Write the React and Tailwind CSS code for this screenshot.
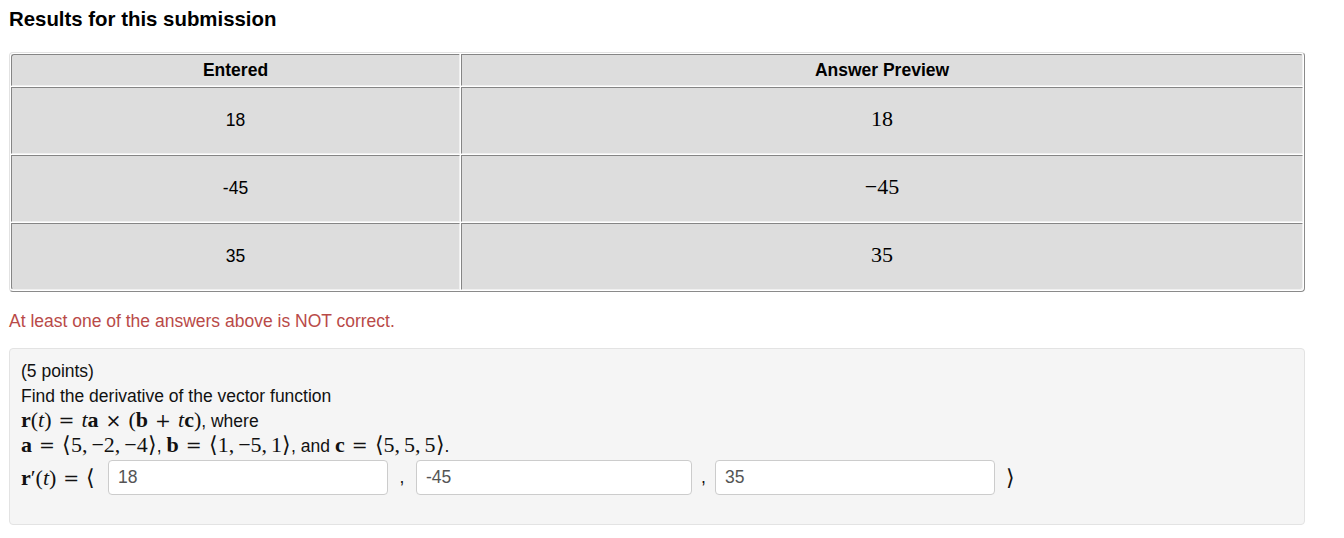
import React from 'react';

const rows = [
  { entered: '18', preview: '18' },
  { entered: '-45', preview: '\u221245' },
  { entered: '35', preview: '35' },
];

const cellBorder =
  'border border-t-[#858585] border-l-[#858585] border-b-[#f0f0f0] border-r-[#f0f0f0] bg-[#dddddd]';

const M = ({ children, className = '' }) => (
  <span className={`font-['Liberation_Serif',serif] text-[22px] leading-[20px] ${className}`}>{children}</span>
);
const B = ({ children }) => <span className="font-bold">{children}</span>;
const I = ({ children }) => <span className="italic">{children}</span>;
// relation (=) and binary (×, +) operators: wider glyphs + TeX-like spacing
const Rel = ({ children }) => (
  <span className="mx-[7px] font-['DejaVu_Serif',serif] text-[19px]">{children}</span>
);
const Bin = ({ children }) => (
  <span className="mx-[7px] font-['DejaVu_Serif',serif] text-[19px]">{children}</span>
);
const C = () => <span className="mr-[4px]">,</span>;

const AnswerInput = ({ value, width }) => (
  <input
    readOnly
    value={value}
    className={`h-[35px] ${width} rounded-[4px] border border-[#cccccc] bg-white px-[9px] text-[17.5px] text-[#555555] outline-none font-['Liberation_Sans',Arial,sans-serif]`}
  />
);

export default function App() {
  return (
    <div className="min-h-[538px] bg-white px-[9px] pt-[7px] font-['Liberation_Sans',Arial,sans-serif] text-[#000]">
      <h2 className="text-[20.4px] font-bold leading-[24px]">Results for this submission</h2>

      <table className="mt-[21px] w-[1296px] border-separate border-spacing-[1px] rounded-[4px] border border-t-[#e2e2e2] border-l-[#e2e2e2] border-r-[#8a8a8a] border-b-[#8a8a8a] text-[17.5px]">
        <thead>
          <tr className="h-[32px]">
            <th className={`${cellBorder} w-[449px] font-bold rounded-tl-[3px]`}>Entered</th>
            <th className={`${cellBorder} font-bold rounded-tr-[3px]`}>Answer Preview</th>
          </tr>
        </thead>
        <tbody>
          {rows.map((r, i) => (
            <tr key={i} className="h-[67px]">
              <td className={`${cellBorder} text-center ${i === 2 ? 'rounded-bl-[3px]' : ''}`}>{r.entered}</td>
              <td className={`${cellBorder} text-center ${i === 2 ? 'rounded-br-[3px]' : ''}`}>
                <M>{r.preview}</M>
              </td>
            </tr>
          ))}
        </tbody>
      </table>

      <p className="mt-[18px] text-[17.5px] leading-[22px] text-[#b94a48]">
        At least one of the answers above is NOT correct.
      </p>

      <div className="mt-[16px] h-[177px] w-[1296px] rounded-[4px] border border-[#e3e3e3] bg-[#f5f5f5] px-[11px] pt-[10px] text-[17.5px] leading-[25px] text-[#111]">
        <div>(5 points)</div>
        <div>Find the derivative of the vector function</div>
        <div>
          <M>
            <B>r</B>(<I>t</I>)<Rel>=</Rel><I>t</I><B>a</B><Bin>×</Bin>(<B>b</B><Bin>+</Bin><I>t</I><B>c</B>)
          </M>
          , where
        </div>
        <div>
          <M>
            <B>a</B><Rel>=</Rel>⟨5<C />−2<C />−4⟩
          </M>
          ,{' '}
          <M>
            <B>b</B><Rel>=</Rel>⟨1<C />−5<C />1⟩
          </M>
          , and{' '}
          <M>
            <B>c</B><Rel>=</Rel>⟨5<C />5<C />5⟩
          </M>
          .
        </div>
        <div className="mt-[1px] flex items-center">
          <M className="w-[87px]">
            <B>r</B>′(<I>t</I>)<Rel>=</Rel>⟨
          </M>
          <AnswerInput value="18" width="w-[280px]" />
          <span className="w-[28px] text-center">,</span>
          <AnswerInput value="-45" width="w-[276px]" />
          <span className="w-[23px] text-center">,</span>
          <AnswerInput value="35" width="w-[280px]" />
          <M className="ml-[11px]">⟩</M>
        </div>
      </div>
    </div>
  );
}
